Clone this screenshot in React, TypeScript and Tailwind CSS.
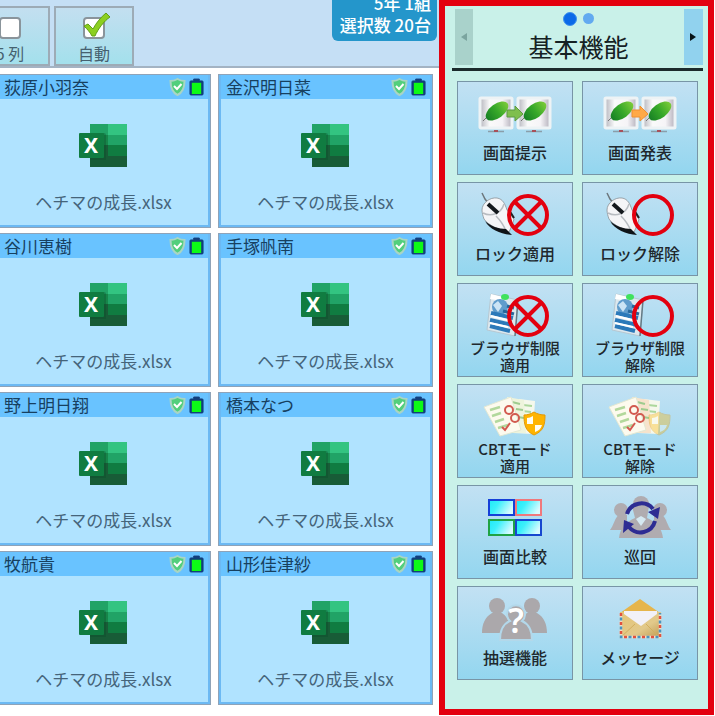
import type { ReactNode } from "react";
import clsx from "clsx";

const students = [
  "荻原小羽奈",
  "金沢明日菜",
  "谷川恵樹",
  "手塚帆南",
  "野上明日翔",
  "橋本なつ",
  "牧航貴",
  "山形佳津紗",
];

function ExcelIcon() {
  return (
    <svg width="50" height="44" viewBox="1 0 50 44" aria-hidden="true">
      <rect x="12" y="1" width="19" height="11" fill="#21a366" />
      <rect x="30" y="1" width="19" height="11" fill="#33c481" />
      <rect x="12" y="12" width="19" height="10" fill="#17864a" />
      <rect x="30" y="12" width="19" height="10" fill="#21a366" />
      <rect x="12" y="22" width="19" height="11" fill="#185c37" />
      <rect x="30" y="22" width="19" height="11" fill="#107c41" />
      <rect x="12" y="33" width="37" height="11" fill="#185c37" />
      <path d="M12 10h14a2 2 0 0 1 2 2v25H12z" fill="#0c4a2a" opacity="0.35" />
      <rect x="1" y="10" width="25" height="25" rx="1" fill="#107c41" />
      <text
        x="13"
        y="30"
        textAnchor="middle"
        fontSize="21"
        fontWeight="700"
        fontFamily="Noto Sans, sans-serif"
        fill="#fff"
      >
        X
      </text>
    </svg>
  );
}

function ShieldIcon() {
  return (
    <svg width="17" height="18" viewBox="0 0 17 18" aria-hidden="true">
      <path
        d="M8.5 1C6 2.6 3.500 3 1.500 3c0 6 1 11 7 14 6-3 7-8 7-14-2 0-4.500-.4-7-2z"
        fill="#52cf7c"
        stroke="#a9d5c4"
        strokeWidth="2"
      />
      <path d="M5 8l3 3 4.500-5" fill="none" stroke="#fff" strokeWidth="2" />
    </svg>
  );
}

function BatteryIcon() {
  return (
    <svg width="15" height="18" viewBox="0 0 16 19" aria-hidden="true">
      <path
        d="M5 3V1h6v2h3a1 1 0 0 1 1 1v13a1 1 0 0 1-1 1H2a1 1 0 0 1-1-1V4a1 1 0 0 1 1-1z"
        fill="#123f7c"
        stroke="#123f7c"
      />
      <rect x="3" y="5" width="10" height="12" fill="#0dfa16" />
    </svg>
  );
}

function StudentCard({ name }: { name: string }) {
  return (
    <article className="h-[154px] border border-[#8fa3b8]">
      <div className="flex h-full flex-col border-2 border-t-0 border-[#6cb9f3] bg-[#b0e3ff]">
        <header className="flex h-6 items-center justify-between bg-[#69c3ff] pl-[5px] pr-1">
          <h2 className="text-[17px] leading-6 text-[#17405f]">{name}</h2>
          <span className="flex items-center gap-[3px]">
            <ShieldIcon />
            <BatteryIcon />
          </span>
        </header>
        <div className="flex flex-1 flex-col items-center pt-6">
          <ExcelIcon />
          <p className="mt-[25px] text-[17px] leading-5 text-[#45647a]">ヘチマの成長.xlsx</p>
        </div>
      </div>
    </article>
  );
}

function CheckBox({ checked }: { checked?: boolean }) {
  return (
    <svg width="30" height="28" viewBox="0 0 30 28" aria-hidden="true" className="overflow-visible">
      <rect x="5" y="6" width="20" height="20" rx="3" fill="#fff" stroke="#8a949b" strokeWidth="2" />
      {checked && (
        <path
          d="M5 14l4-2 5 5C17 11 22 5 27 1l4 4C25 9 19 17 16 24h-3C11 20 8 17 5 14z"
          fill="#8ccf1f"
          stroke="#5f9f16"
        />
      )}
    </svg>
  );
}

function ToolbarButton({ label, checked }: { label: string; checked?: boolean }) {
  return (
    <button
      type="button"
      className="flex w-20 shrink-0 flex-col items-center border-2 border-[#9dabb6] bg-linear-to-b from-[#c3dff0] to-[#a3e0ec] pt-1"
    >
      <CheckBox checked={checked} />
      <span className="mt-[3px] text-[16px] leading-5 text-[#46616f]">{label}</span>
    </button>
  );
}

/* ---- icons of the function panel, all on an 84x46 canvas ---- */

function Icon({ children }: { children: ReactNode }) {
  return (
    <svg width="84" height="46" viewBox="0 0 84 46" className="shrink-0" aria-hidden="true">
      {children}
    </svg>
  );
}

function Screen({ x }: { x: number }) {
  return (
    <g transform={`translate(${x} 0)`}>
      <rect x="1" y="7" width="32" height="30" rx="1" fill="url(#screen)" stroke="#eef3f5" strokeWidth="3" />
      <path d="M9 40.500h16" stroke="#8a9eaa" strokeWidth="1.500" />
      <path d="M15 40h4" stroke="#a8505a" strokeWidth="2" />
      <path d="M4 30l5-5" fill="none" stroke="#777" />
      <ellipse cx="18" cy="20" rx="13" ry="7" transform="rotate(-36 18 20)" fill="url(#leaf)" />
    </g>
  );
}

function ScreensIcon({ arrow, edge }: { arrow: string; edge: string }) {
  return (
    <Icon>
      <defs>
        <linearGradient id="screen">
          <stop offset="0" stopColor="#b5b5bd" />
          <stop offset="0.300" stopColor="#fafafa" />
          <stop offset="0.700" stopColor="#f6f4f7" />
          <stop offset="1" stopColor="#b4b0bb" />
        </linearGradient>
        <linearGradient id="leaf" x1="0" y1="0.500" x2="1" y2="0.500">
          <stop offset="0" stopColor="#178025" />
          <stop offset="0.500" stopColor="#37a829" />
          <stop offset="1" stopColor="#7ccb39" />
        </linearGradient>
      </defs>
      <Screen x={6} />
      <Screen x={44} />
      <path d="M34 19h8v-4l8 8-8 7v-4h-8z" fill={arrow} stroke={edge} />
    </Icon>
  );
}

function Sign({ crossed }: { crossed?: boolean }) {
  return (
    <g fill="none" stroke="#e3000f" strokeWidth="4">
      <circle cx="55" cy="23" r="19" />
      {crossed && <path d="M41.500 9.500l27 27M68.500 9.500l-27 27" />}
    </g>
  );
}

function MouseIcon({ crossed }: { crossed?: boolean }) {
  return (
    <Icon>
      <path d="M9 1l3 6 4 5" fill="none" stroke="#6d777d" strokeWidth="1.500" />
      <path
        d="M9 18c0-7 8-13 15-12 6 1 8 6 10 12l7 9c-1 4-3 9-5 13-10-2-21-7-25-13-1-3-2-6-2-9z"
        fill="#f5f5f7"
        stroke="#8b9297"
        strokeWidth="0.800"
      />
      <path d="M10 21c8 4 18 1 21-9M23 24c5 5 8 10 10 15" fill="none" stroke="#b8bcc1" strokeWidth="1.500" />
      <path d="M15 12l10 9" stroke="#15191d" strokeWidth="4" />
      <path d="M36 18l5 8" stroke="#222" strokeWidth="2" />
      <path d="M12 29c5 5 14 8 21 8l6 6c-11-1-22-5-27-14z" fill="#101418" />
      <Sign crossed={crossed} />
    </Icon>
  );
}

function BrowserIcon({ crossed }: { crossed?: boolean }) {
  return (
    <Icon>
      <path d="M18 1l27 6-3 36-28-6z" fill="#dce8ee" stroke="#b6c8d2" />
      <path d="M45 7l-3 36" stroke="#647b86" strokeWidth="1.500" />
      <path d="M18 1l16 4-4 3-13-2z" fill="#fff" />
      <circle cx="27" cy="14" r="8" fill="#5f9ccc" />
      <path d="M20 12l5-4 4 5-4 6z" fill="#cbe4f5" />
      <ellipse cx="32" cy="4" rx="4" ry="3" fill="#3fe25c" />
      <path d="M18 20l22 5M17 27l22 5M17 33l20 5" stroke="#2b79b9" strokeWidth="4" />
      <path d="M34 13l7 2M30 18l11 3" stroke="#26679b" strokeWidth="3" />
      <path d="M18 23l20 5M17 30l18 4" stroke="#fff" strokeWidth="2" />
      <Sign crossed={crossed} />
    </Icon>
  );
}

function CbtIcon({ faded }: { faded?: boolean }) {
  return (
    <Icon>
      <path d="M46 5l16 2-2 33-20-1z" fill="#f5f8ec" />
      <path d="M50 11l9 1M49 17l9 1" stroke="#acd79c" strokeWidth="2" />
      <path d="M34 3l17 3 2 33-20 0z" fill={faded ? "#f6e3cc" : "#eef4dc"} />
      <path d="M39 8l8 2M43 15l7 1M45 23l6 1" stroke="#9ecb8e" strokeWidth="2" />
      <path d="M11 13l27-10 10 33-21 6z" fill="#fdfaee" stroke="#e2e8d3" />
      <path d="M17 16l10-3M19 22l9-3M22 28l9-3M25 34l10-3" stroke="#b2d89c" strokeWidth="2.500" />
      <g fill="none" stroke="#d25a4f" strokeWidth="2">
        <circle cx="36" cy="16" r="4" />
        <circle cx="42" cy="24" r="4" />
        <path d="M29 33l3 3 5-7" />
      </g>
      <g opacity={faded ? 0.35 : 1}>
        <path d="M61 18c-3 2-7 3-10 3 0 9 1 16 10 20 10-4 11-11 11-20-4 0-8-1-11-3z" fill="#ffb400" stroke="#e39a08" />
        <path d="M60 22c-2 1-4 2-6 2v6h6zM62 31h7c-1 4-4 6-7 7z" fill="#fffdf2" />
      </g>
    </Icon>
  );
}

function CompareIcon() {
  return (
    <Icon>
      <defs>
        <linearGradient id="pane" x1="0" y1="0" x2="1" y2="0.400">
          <stop offset="0" stopColor="#1feaf8" />
          <stop offset="0.400" stopColor="#3cf0fb" />
          <stop offset="1" stopColor="#d8fbff" />
        </linearGradient>
      </defs>
      <g fill="url(#pane)" strokeWidth="2">
        <rect x="16" y="5" width="25" height="15" stroke="#1540d8" />
        <rect x="43" y="5" width="25" height="15" stroke="#f0787c" />
        <rect x="16" y="25" width="25" height="15" stroke="#1fa344" />
        <rect x="43" y="25" width="25" height="15" stroke="#1747cf" />
      </g>
    </Icon>
  );
}

function PatrolIcon() {
  return (
    <Icon>
      <g fill="#b0acb0">
        <circle cx="23" cy="15" r="7" />
        <circle cx="62" cy="15" r="7" />
        <path d="M12 35c3-3 5-13 9-15h8v15zM73 35c-3-3-5-13-9-15h-8v15z" />
        <circle cx="43" cy="9" r="8" />
        <path d="M21 43c1-10 7-16 16-20l-3-12h17l-2 12c9 4 15 10 16 20z" />
      </g>
      <path d="M38 24l5 7 5-7-5-3z" fill="#d5e9f2" />
      <g fill="none" stroke="#2d2c93" strokeWidth="4">
        <path d="M29 19a15 15 0 0 1 26-5" />
        <path d="M57 26a15 15 0 0 1-26 6" />
      </g>
      <path d="M50 17l12-5-2 12zM36 29l-10-4-1 13z" fill="#2d2c93" />
    </Icon>
  );
}

function LotteryIcon() {
  return (
    <Icon>
      <g fill="#aba8ab">
        <circle cx="24" cy="10" r="8" />
        <circle cx="59" cy="10" r="8" />
        <path d="M9 37c0-9 3-16 10-20h10c6 4 9 11 9 20zM45 37c0-9 3-16 9-20h10c7 4 10 11 10 20z" />
      </g>
      <path
        d="M27 44c0-9 3-16 10-19a9 9 0 1 1 12 0c7 3 10 10 10 19z"
        fill="#aba8ab"
        stroke="#b3d8ea"
        strokeWidth="2"
      />
      <text
        x="43"
        y="37"
        textAnchor="middle"
        fontSize="34"
        fontWeight="600"
        fontFamily="Noto Sans, sans-serif"
        fill="#fff"
      >
        ?
      </text>
    </Icon>
  );
}

function MessageIcon() {
  return (
    <Icon>
      <defs>
        <linearGradient id="paper" x1="0" y1="0" x2="1" y2="1">
          <stop offset="0" stopColor="#e5c574" />
          <stop offset="0.600" stopColor="#e2c98b" />
          <stop offset="1" stopColor="#bd994e" />
        </linearGradient>
      </defs>
      <path d="M22 17L42 3l20 14z" fill="#e6b54c" />
      <rect x="22" y="16" width="41" height="26" fill="url(#paper)" />
      <path d="M26 15h33v3L43 30 26 18z" fill="#f2f1f8" />
      <path d="M22 42l15-14M62 42L48 28" stroke="#d3ae5f" />
      <g fill="none" strokeWidth="2.500">
        <path d="M23 17v24h39V17" stroke="#eedfc4" />
        <path d="M23 17v24h39V17" stroke="#e2513f" strokeDasharray="3 6" />
        <path d="M23 17v24h39V17" stroke="#4a94c0" strokeDasharray="3 6" strokeDashoffset="-4.500" />
      </g>
    </Icon>
  );
}

const functions: { lines: string[]; icon: ReactNode }[] = [
  { lines: ["画面提示"], icon: <ScreensIcon arrow="#7fbf4d" edge="#5d9a42" /> },
  { lines: ["画面発表"], icon: <ScreensIcon arrow="#ffa947" edge="#ef9032" /> },
  { lines: ["ロック適用"], icon: <MouseIcon crossed /> },
  { lines: ["ロック解除"], icon: <MouseIcon /> },
  { lines: ["ブラウザ制限", "適用"], icon: <BrowserIcon crossed /> },
  { lines: ["ブラウザ制限", "解除"], icon: <BrowserIcon /> },
  { lines: ["CBTモード", "適用"], icon: <CbtIcon /> },
  { lines: ["CBTモード", "解除"], icon: <CbtIcon faded /> },
  { lines: ["画面比較"], icon: <CompareIcon /> },
  { lines: ["巡回"], icon: <PatrolIcon /> },
  { lines: ["抽選機能"], icon: <LotteryIcon /> },
  { lines: ["メッセージ"], icon: <MessageIcon /> },
];

function FunctionButton({ lines, icon }: { lines: string[]; icon: ReactNode }) {
  return (
    <button
      type="button"
      className="flex h-[94px] flex-col items-center border border-[#7895a6] bg-linear-to-b from-[#c2e1f3] to-[#93d6ef] pt-[9px] font-medium text-[#20282d]"
    >
      {icon}
      <span className={clsx("flex flex-col", lines.length > 1 ? "text-[15px] leading-[17px]" : "text-[16px] leading-[30px]")}>
        {lines.map((line) => (
          <span key={line}>{line}</span>
        ))}
      </span>
    </button>
  );
}

function FunctionPanel() {
  return (
    <aside className="mr-px w-[275px] shrink-0 self-start border-6 border-[#e3000f] bg-[#c9f1e9] pb-[29px]">
      <div className="ml-[7px] mr-[5px] flex h-[65px] justify-between border-b-3 border-[#1c2b2c] pl-[3px] pt-[3px]">
        <button type="button" aria-label="前へ" className="mb-[3px] flex w-[18px] items-center justify-center bg-[#a9d2cb]">
          <svg width="6" height="8" viewBox="0 0 6 8" aria-hidden="true">
            <path d="M6 0v8L0 4z" fill="#7ba49f" />
          </svg>
        </button>
        <div className="flex flex-col items-center">
          <div className="flex h-[19px] items-center gap-[6px]">
            <span className="size-[14px] rounded-full border border-[#3e92ee] bg-[#0b6ae8]" />
            <span className="size-[11px] rounded-full bg-[#62aaf0]" />
          </div>
          <h1 className="text-[25px] leading-9 text-[#152123]">基本機能</h1>
        </div>
        <button type="button" aria-label="次へ" className="mb-[3px] flex w-[19px] items-center justify-center bg-[#91d2ee]">
          <svg width="6" height="8" viewBox="0 0 6 8" aria-hidden="true">
            <path d="M0 0v8l6-4z" fill="#071318" />
          </svg>
        </button>
      </div>
      <div className="grid grid-cols-2 gap-x-[9px] gap-y-[7px] pl-3 pr-[10px] pt-[10px]">
        {functions.map((fn) => (
          <FunctionButton key={fn.lines.join("")} {...fn} />
        ))}
      </div>
    </aside>
  );
}

export default function App() {
  return (
    <div className="flex min-h-screen bg-white font-['Noto_Sans_CJK_JP',sans-serif]">
      <main className="min-w-0 flex-1 overflow-hidden">
        <div className="flex h-[68px] justify-between border-b-2 border-[#a3b3c3] bg-[#c5dff5]">
          <div className="-ml-[30px] flex gap-1 pt-[6px]">
            <ToolbarButton label="5 列" />
            <ToolbarButton label="自動" checked />
          </div>
          <div className="-mt-2 mr-[2px] shrink-0 self-start rounded-b-md bg-[#2496cb] pb-[5px] pl-2 pr-[6px] text-right text-[17px] font-medium leading-[22px] text-white">
            <p>5年 1組</p>
            <p>選択数 20台</p>
          </div>
        </div>
        <div className="-ml-1 grid grid-cols-2 gap-x-[7px] gap-y-[5px] pr-[6px] pt-[6px]">
          {students.map((name) => (
            <StudentCard key={name} name={name} />
          ))}
        </div>
      </main>
      <FunctionPanel />
    </div>
  );
}
